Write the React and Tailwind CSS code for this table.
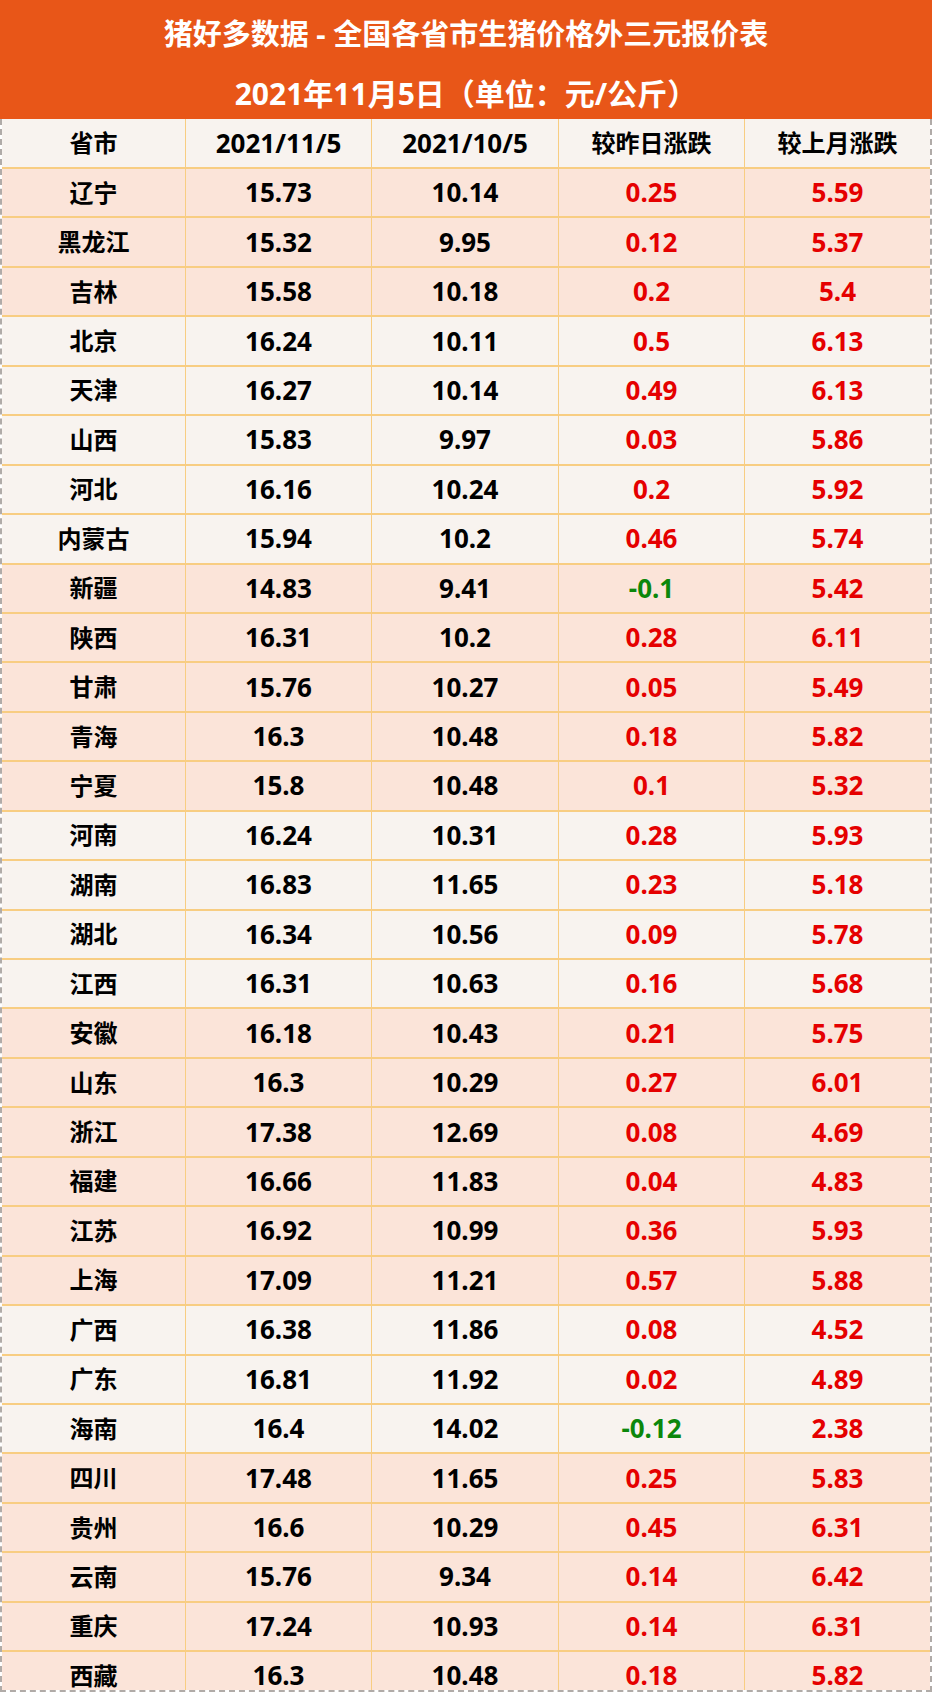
const rows = [
    ["辽宁", "15.73", "10.14", "0.25", "5.59", 1],
    ["黑龙江", "15.32", "9.95", "0.12", "5.37", 1],
    ["吉林", "15.58", "10.18", "0.2", "5.4", 1],
    ["北京", "16.24", "10.11", "0.5", "6.13", 0],
    ["天津", "16.27", "10.14", "0.49", "6.13", 0],
    ["山西", "15.83", "9.97", "0.03", "5.86", 0],
    ["河北", "16.16", "10.24", "0.2", "5.92", 0],
    ["内蒙古", "15.94", "10.2", "0.46", "5.74", 0],
    ["新疆", "14.83", "9.41", "-0.1", "5.42", 1],
    ["陕西", "16.31", "10.2", "0.28", "6.11", 1],
    ["甘肃", "15.76", "10.27", "0.05", "5.49", 1],
    ["青海", "16.3", "10.48", "0.18", "5.82", 1],
    ["宁夏", "15.8", "10.48", "0.1", "5.32", 1],
    ["河南", "16.24", "10.31", "0.28", "5.93", 0],
    ["湖南", "16.83", "11.65", "0.23", "5.18", 0],
    ["湖北", "16.34", "10.56", "0.09", "5.78", 0],
    ["江西", "16.31", "10.63", "0.16", "5.68", 0],
    ["安徽", "16.18", "10.43", "0.21", "5.75", 1],
    ["山东", "16.3", "10.29", "0.27", "6.01", 1],
    ["浙江", "17.38", "12.69", "0.08", "4.69", 1],
    ["福建", "16.66", "11.83", "0.04", "4.83", 1],
    ["江苏", "16.92", "10.99", "0.36", "5.93", 1],
    ["上海", "17.09", "11.21", "0.57", "5.88", 1],
    ["广西", "16.38", "11.86", "0.08", "4.52", 0],
    ["广东", "16.81", "11.92", "0.02", "4.89", 0],
    ["海南", "16.4", "14.02", "-0.12", "2.38", 0],
    ["四川", "17.48", "11.65", "0.25", "5.83", 1],
    ["贵州", "16.6", "10.29", "0.45", "6.31", 1],
    ["云南", "15.76", "9.34", "0.14", "6.42", 1],
    ["重庆", "17.24", "10.93", "0.14", "6.31", 1],
    ["西藏", "16.3", "10.48", "0.18", "5.82", 1],
];

const cols = "grid grid-cols-[184px_186px_187px_186px_185px]";
const cell = "flex items-center justify-center border-r border-b-2 border-[#f8cd82] last:border-r-0";
// digits in the original are wider than the CJK glyphs, so numbers get a bigger size
const num = "text-[26px]";

const change = (v) => (v.startsWith("-") ? "text-[#0b870b]" : "text-[#e50000]");

const App = () => {
    return (
        <div
            className="w-[934px] h-[1702px] bg-white overflow-hidden"
            style={{ fontFamily: '"Noto Sans", "Noto Sans CJK SC", sans-serif' }}
        >
            <div className="w-[932px] h-[119px] bg-[#e85618] flex flex-col items-center text-white font-bold leading-none pt-[19px] gap-[31px]">
                <div className="text-[29px]">猪好多数据 - 全国各省市生猪价格外三元报价表</div>
                <div className="text-[30px]">2021年11月5日（单位：元/公斤）</div>
            </div>

            <div className="w-[932px] h-[1573px] overflow-hidden border-x-2 border-b-2 border-dashed border-[#b0aba8] text-[24px] font-bold text-black">
                <div className={`${cols} h-[50px] bg-[#f8f3ef]`}>
                    <div className={cell}>省市</div>
                    <div className={`${cell} ${num}`}>2021/11/5</div>
                    <div className={`${cell} ${num}`}>2021/10/5</div>
                    <div className={cell}>较昨日涨跌</div>
                    <div className={cell}>较上月涨跌</div>
                </div>
                {rows.map(([name, a, b, d, m, peach]) => (
                    <div key={name} className={`${cols} h-[49.45px] ${peach ? "bg-[#fbe4d9]" : "bg-[#f8f3ef]"}`}>
                        <div className={cell}>{name}</div>
                        <div className={`${cell} ${num}`}>{a}</div>
                        <div className={`${cell} ${num}`}>{b}</div>
                        <div className={`${cell} ${num} ${change(d)}`}>{d}</div>
                        <div className={`${cell} ${num} text-[#e50000]`}>{m}</div>
                    </div>
                ))}
            </div>
        </div>
    );
};

export default App;
